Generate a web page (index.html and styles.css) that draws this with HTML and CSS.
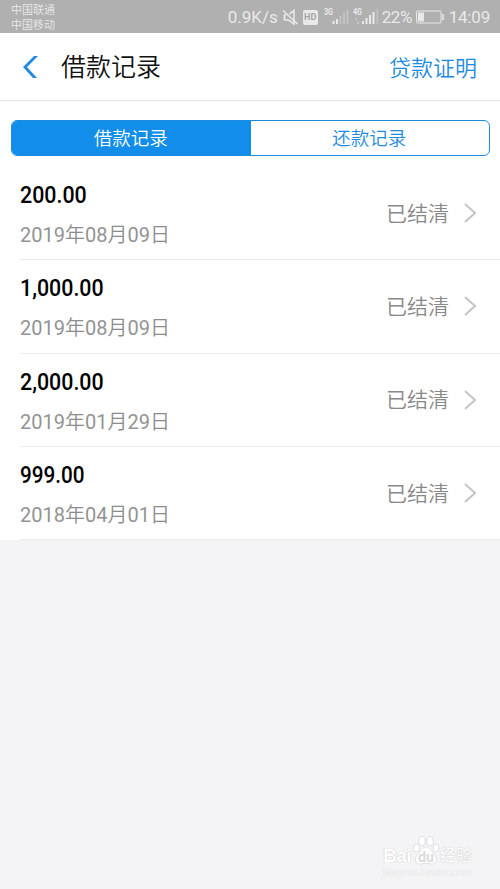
FILE: index.html
```html
<!DOCTYPE html>
<html lang="zh-CN">
<head>
    <meta charset="UTF-8">
    <meta name="viewport" content="width=device-width, initial-scale=1.0">
    <title>借款记录</title>
    <link rel="stylesheet" href="styles.css">
</head>
<body>
    <div class="status-bar">
        <div class="carriers">
            <div>中国联通</div>
            <div>中国移动</div>
        </div>
        <div class="status">
            <span class="speed">0.9K/s</span>
            <svg class="mute" width="17" height="18" viewBox="0 0 17 18" fill="none" stroke="currentColor" stroke-width="1.6">
                <path d="M7.500 6L12 2.500V16L6.500 12H2.500V7H4"/>
                <path d="M1 2.500l14.500 13.500"/>
            </svg>
            <span class="hd">HD</span>
            <svg class="signal" width="26" height="18" viewBox="0 0 26 18" fill="currentColor">
                <text x="0" y="8" class="net" textLength="9" lengthAdjust="spacingAndGlyphs">3G</text>
                <path d="M8.500 14h2v3h-2zM12 12h2v5h-2z"/>
                <path class="dim" d="M15.500 9h2v8h-2zM19 6h2v11h-2zM22.500 3h2v14h-2z"/>
            </svg>
            <svg class="signal" width="26" height="18" viewBox="0 0 26 18" fill="currentColor">
                <text x="0" y="8" class="net" textLength="9" lengthAdjust="spacingAndGlyphs">4G</text>
                <path class="dim" d="M2 11h2v2H2zM4 14h2v3H4zM23.500 2h1.500v15h-1.500z"/>
                <path d="M9 14h2v3H9zM12.500 11h2v6h-2zM16 8h2v9h-2zM19.500 5h2v12h-2z"/>
            </svg>
            <span class="percent">22%</span>
            <svg class="battery" width="28" height="14" viewBox="0 0 28 14" fill="none" stroke="currentColor">
                <rect x="0.600" y="1" width="24.400" height="12" rx="1"/>
                <path d="M2 2.500h6v9H2z" fill="currentColor" stroke="none"/>
                <path d="M27 4v6" stroke-width="1.600"/>
            </svg>
            <span class="time">14:09</span>
        </div>
    </div>

    <div class="header">
        <svg class="back" width="16" height="22" viewBox="0 0 16 22" fill="currentColor">
            <path d="M12 0h4L5 11l10 11h-4L1 11z"/>
        </svg>
        <h1>借款记录</h1>
        <a class="proof">贷款证明</a>
    </div>

    <div class="records">
        <div class="tabs">
            <div class="tab active">借款记录</div>
            <div class="tab">还款记录</div>
        </div>
        <div class="list">
            <div class="row">
                <div class="info">
                    <div class="amount">200.00</div>
                    <div class="date"><b>2019</b>年<b>08</b>月<b>09</b>日</div>
                </div>
                <div class="state">已结清</div>
                <svg class="arrow" width="13" height="20" viewBox="0 0 13 20"><path d="M1 1l10 9-10 9"/></svg>
            </div>
            <div class="row">
                <div class="info">
                    <div class="amount">1,000.00</div>
                    <div class="date"><b>2019</b>年<b>08</b>月<b>09</b>日</div>
                </div>
                <div class="state">已结清</div>
                <svg class="arrow" width="13" height="20" viewBox="0 0 13 20"><path d="M1 1l10 9-10 9"/></svg>
            </div>
            <div class="row">
                <div class="info">
                    <div class="amount">2,000.00</div>
                    <div class="date"><b>2019</b>年<b>01</b>月<b>29</b>日</div>
                </div>
                <div class="state">已结清</div>
                <svg class="arrow" width="13" height="20" viewBox="0 0 13 20"><path d="M1 1l10 9-10 9"/></svg>
            </div>
            <div class="row">
                <div class="info">
                    <div class="amount narrow">999.00</div>
                    <div class="date"><b>2018</b>年<b>04</b>月<b>01</b>日</div>
                </div>
                <div class="state">已结清</div>
                <svg class="arrow" width="13" height="20" viewBox="0 0 13 20"><path d="M1 1l10 9-10 9"/></svg>
            </div>
        </div>
    </div>

    <div class="watermark">
        <div class="brand">
            <span class="bai">Bai</span>
            <svg class="paw" width="28" height="31" viewBox="0 0 28 31">
                <ellipse cx="4.500" cy="13" rx="3" ry="4"/>
                <ellipse cx="10" cy="6" rx="3.200" ry="4.500"/>
                <ellipse cx="18" cy="6" rx="3.200" ry="4.500"/>
                <ellipse cx="24" cy="13" rx="3" ry="4"/>
                <path d="M14 12c4 0 5 4 8 7 5 5 2 11-3 10-4-1-6-1-10 0-5 1-8-5-3-10 3-3 4-7 8-7z"/>
                <text x="14" y="27" text-anchor="middle">du</text>
            </svg>
            <span class="jingyan">经验</span>
        </div>
        <div class="site">jingyan.baidu.com</div>
    </div>
</body>
</html>
```

FILE: styles.css
```css
* {
    box-sizing: border-box;
}
body {
    margin: 0;
    min-height: 889px;
    background: #f4f4f6;
    font-family: Roboto, "Noto Sans CJK SC", sans-serif;
    position: relative;
}
.status-bar {
    display: flex;
    justify-content: space-between;
    height: 33px;
    padding: 1px 11px 0 11px;
    background: #b0b0b0;
    color: #e9e9e9;
}
.carriers {
    padding-top: 2px;
    font-size: 11px;
    font-weight: 350;
    line-height: 15px;
}
.status {
    display: flex;
    align-items: center;
    font-size: 17px;
}
.speed {
    width: 54px;
    white-space: nowrap;
}
.mute {
    margin-right: 4px;
}
.hd {
    width: 15px;
    height: 15px;
    margin-right: 6px;
    border-radius: 2px;
    background: #e9e9e9;
    color: #a4a4a4;
    font-size: 9px;
    font-weight: 700;
    line-height: 15px;
    text-align: center;
}
.signal {
    margin: -2px 3px 0 0;
}
.net {
    font-size: 9px;
    font-weight: 700;
}
.dim {
    opacity: 0.35;
}
.percent {
    width: 34px;
    letter-spacing: -0.4px;
}
.battery {
    margin-right: 5px;
}
.time {
    margin-right: -1px;
    letter-spacing: -0.2px;
}
.header {
    display: flex;
    align-items: center;
    height: 68px;
    padding: 0 23px 0 22px;
    background: #fff;
    border-bottom: 1px solid #e2e2e2;
}
.back {
    margin-right: 23px;
    color: #1e8ae0;
}
.header h1 {
    flex: 1;
    margin: 0;
    padding-top: 3px;
    color: #111;
    font-size: 25px;
    font-weight: 350;
    line-height: 36px;
}
.proof {
    padding-top: 5px;
    color: #1e8be0;
    font-size: 22px;
    font-weight: 350;
    line-height: 32px;
}
.records {
    padding-top: 19px;
    background: #fff;
}
.tabs {
    display: flex;
    height: 36px;
    margin: 0 10px 11px 11px;
    border: 1px solid #1e8be0;
    border-radius: 6px;
    overflow: hidden;
}
.tab {
    flex: 1;
    padding: 2px 1px 0 0;
    color: #1e8be0;
    font-size: 18.500px;
    font-weight: 350;
    line-height: 33px;
    text-align: center;
}
.tab.active {
    background: #128eea;
    color: #fff;
}
.list {
    padding-left: 20px;
}
.row {
    display: flex;
    align-items: center;
    height: 93.3px;
    padding-right: 23px;
    border-bottom: 1px solid #ececec;
}
.info {
    flex: 1;
    padding-top: 5px;
}
.amount {
    margin-bottom: 11px;
    color: #000;
    font-size: 23px;
    font-weight: 500;
    line-height: 28px;
    transform: scaleX(0.93);
    transform-origin: left;
}
.amount.narrow {
    transform: scaleX(0.9);
}
.date {
    color: #8c8c8c;
    font-size: 20px;
    font-weight: 350;
    line-height: 28px;
}
.date b {
    color: #939393;
    font-weight: 400;
}
.state {
    margin-right: 15px;
    padding-top: 1px;
    color: #888;
    font-size: 21px;
    font-weight: 350;
    line-height: 30px;
}
.arrow {
    fill: none;
    stroke: #c4c4c4;
    stroke-width: 2;
}
.watermark {
    position: absolute;
    right: 26px;
    bottom: 10px;
    width: 91px;
    color: #fff;
    text-shadow: 0 0 1px #aaa;
}
.brand {
    display: flex;
    align-items: flex-end;
    height: 31px;
}
.bai {
    width: 29px;
    font-family: "Liberation Sans", Arial, sans-serif;
    font-size: 19px;
    font-weight: 700;
    letter-spacing: -0.5px;
    line-height: 20px;
}
.paw {
    flex: none;
    fill: #fff;
    stroke: #d4d4d6;
    stroke-width: 0.7;
}
.paw text {
    fill: #dadadc;
    stroke: none;
    font-size: 14px;
    font-weight: 700;
    text-shadow: none;
}
.jingyan {
    font-size: 16px;
    font-weight: 500;
    line-height: 20px;
    white-space: nowrap;
}
.site {
    color: #f8f8f9;
    font-size: 11px;
    line-height: 13px;
    text-shadow: 0 0 1px #ccc;
}
```
